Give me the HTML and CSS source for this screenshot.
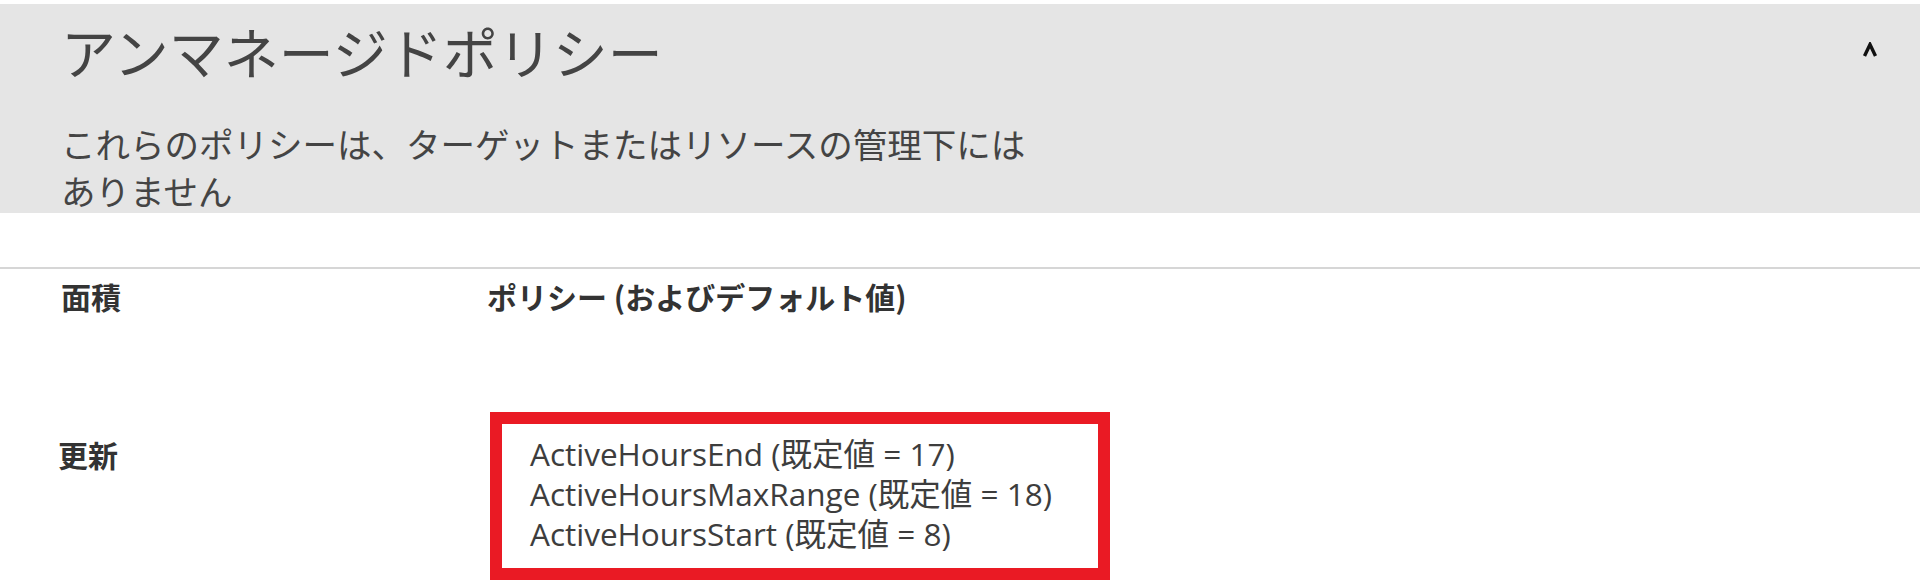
FILE: index.html
```
<!DOCTYPE html>
<html lang="ja">
<head>
  <meta charset="UTF-8" />
  <meta name="viewport" content="width=device-width, initial-scale=1" />
  <title>アンマネージドポリシー</title>
  <link rel="stylesheet" href="styles.css">
</head>
<body>

  <section class="policy-panel">
    <div class="panel-head">
      <h1>アンマネージドポリシー</h1>
      <button class="collapse-btn" aria-label="折りたたむ">
        <svg width="16" height="16" viewBox="0 0 16 16">
          <polyline points="2.5,14 8,2.5 13.5,14" fill="none" stroke="#111" stroke-width="3.4" stroke-linejoin="miter" />
        </svg>
      </button>
    </div>
    <p class="panel-desc">これらのポリシーは、ターゲットまたはリソースの管理下には<br>ありません</p>
  </section>

  <div class="policy-table">
    <div class="policy-row head-row">
      <div class="col-area">面積</div>
      <div class="col-policy">ポリシー (およびデフォルト値)</div>
    </div>

    <div class="policy-row">
      <div class="col-area area-label">更新</div>
      <div class="col-policy">
        <ul class="policy-list highlight">
          <li>ActiveHoursEnd (既定値 = 17)</li>
          <li>ActiveHoursMaxRange (既定値 = 18)</li>
          <li>ActiveHoursStart (既定値 = 8)</li>
        </ul>
      </div>
    </div>
  </div>

</body>
</html>
```

FILE: styles.css
```
body {
  font-family: "Noto Sans CJK JP", "Noto Sans", sans-serif;
  background: #ffffff;
  color: #333;
  margin: 0;
  padding: 0;
}

.policy-panel {
  margin-top: 4px;
  height: 209px;
  box-sizing: border-box;
  background: #e5e5e5;
  padding: 13px 0 0 61px;
}

.panel-head {
  display: flex;
  align-items: flex-start;
  justify-content: space-between;
}

.panel-head h1 {
  margin: 0;
  font-size: 55px;
  font-weight: 400;
  line-height: 66px;
  color: #444;
}

.collapse-btn {
  background: none;
  border: none;
  padding: 0;
  margin: 25px 42px 0 0;
  cursor: pointer;
}

.panel-desc {
  margin: 37px 0 0;
  font-size: 34.5px;
  line-height: 47px;
  color: #444;
}

.policy-table {
  margin-top: 54px;
  border-top: 2px solid #d6d6d6;
}

.policy-row {
  display: grid;
  grid-template-columns: 426px 1fr;
  padding-left: 61px;
}

.head-row {
  padding-top: 6px;
  height: 143px;
  box-sizing: border-box;
}

.col-area,
.col-policy {
  font-size: 30px;
  font-weight: 700;
  line-height: 42px;
  color: #333;
}

.area-label {
  padding-top: 24px;
  line-height: 36px;
  margin-left: -3px;
}

.policy-list {
  list-style: none;
  margin: 0 0 0 3px;
  width: 620px;
  box-sizing: border-box;
  padding: 10px 28px 14px;
}

.policy-list li {
  font-family: "Open Sans", "Noto Sans CJK JP", sans-serif;
  font-size: 31.5px;
  font-weight: 400;
  line-height: 40px;
  color: #3d3d3d;
}

.highlight {
  border: 12px solid #ea1a24;
}
```
